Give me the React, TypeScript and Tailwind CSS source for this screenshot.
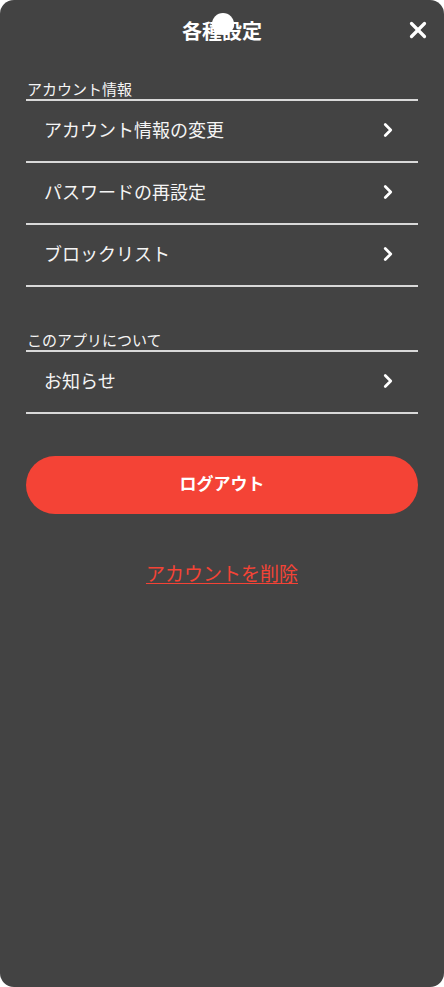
import { ChevronRight, X } from 'lucide-react';

const font = "font-['Liberation_Serif','Noto_Sans_CJK_JP',serif]";

function Row({ label }: { label: string }) {
  return (
    <button
      type="button"
      className="flex h-[62px] w-full items-center justify-between border-b-2 border-[#d9d9d9] pr-[19px] pl-[18px] text-left"
    >
      <span className="text-[18px] leading-[24px] text-[#f5f5f5]">{label}</span>
      <ChevronRight size={22} strokeWidth={3} className="-mt-[2px] text-white" aria-hidden="true" />
    </button>
  );
}

function Section({ title, items }: { title: string; items: string[] }) {
  return (
    <section>
      <h2 className="border-b-2 border-[#d9d9d9] pl-px text-[15px] leading-[18px] text-[#f5f5f5]">
        {title}
      </h2>
      {items.map((item) => (
        <Row key={item} label={item} />
      ))}
    </section>
  );
}

export default function App() {
  return (
    <div className={`min-h-screen bg-white ${font}`}>
      <div className="relative h-[987px] w-[444px] overflow-hidden rounded-[14px] bg-[#434343]">
        <header className="relative flex h-[62px] justify-center pt-[19px]">
          <h1 className="text-[20px] leading-[26px] font-bold text-white">各種設定</h1>
          <span className="absolute top-[13px] left-[212px] h-[22px] w-[22px] rounded-full bg-white" />
          <button type="button" className="absolute top-[17px] right-[13px] text-white" aria-label="閉じる">
            <X size={26} strokeWidth={3} />
          </button>
        </header>

        <div className="px-[26px] pt-[19px]">
          <Section
            title="アカウント情報"
            items={['アカウント情報の変更', 'パスワードの再設定', 'ブロックリスト']}
          />
          <div className="mt-[45px]">
            <Section title="このアプリについて" items={['お知らせ']} />
          </div>

          <button
            type="button"
            className="mt-[42px] flex h-[58px] w-full items-center justify-center rounded-full bg-[#f44336] text-[17px] font-bold text-white"
          >
            ログアウト
          </button>

          <div className="mt-[47px] flex justify-center">
            <a href="#" className="text-[19px] leading-[28px] text-[#f44336] underline underline-offset-2">
              アカウントを削除
            </a>
          </div>
        </div>
      </div>
    </div>
  );
}
